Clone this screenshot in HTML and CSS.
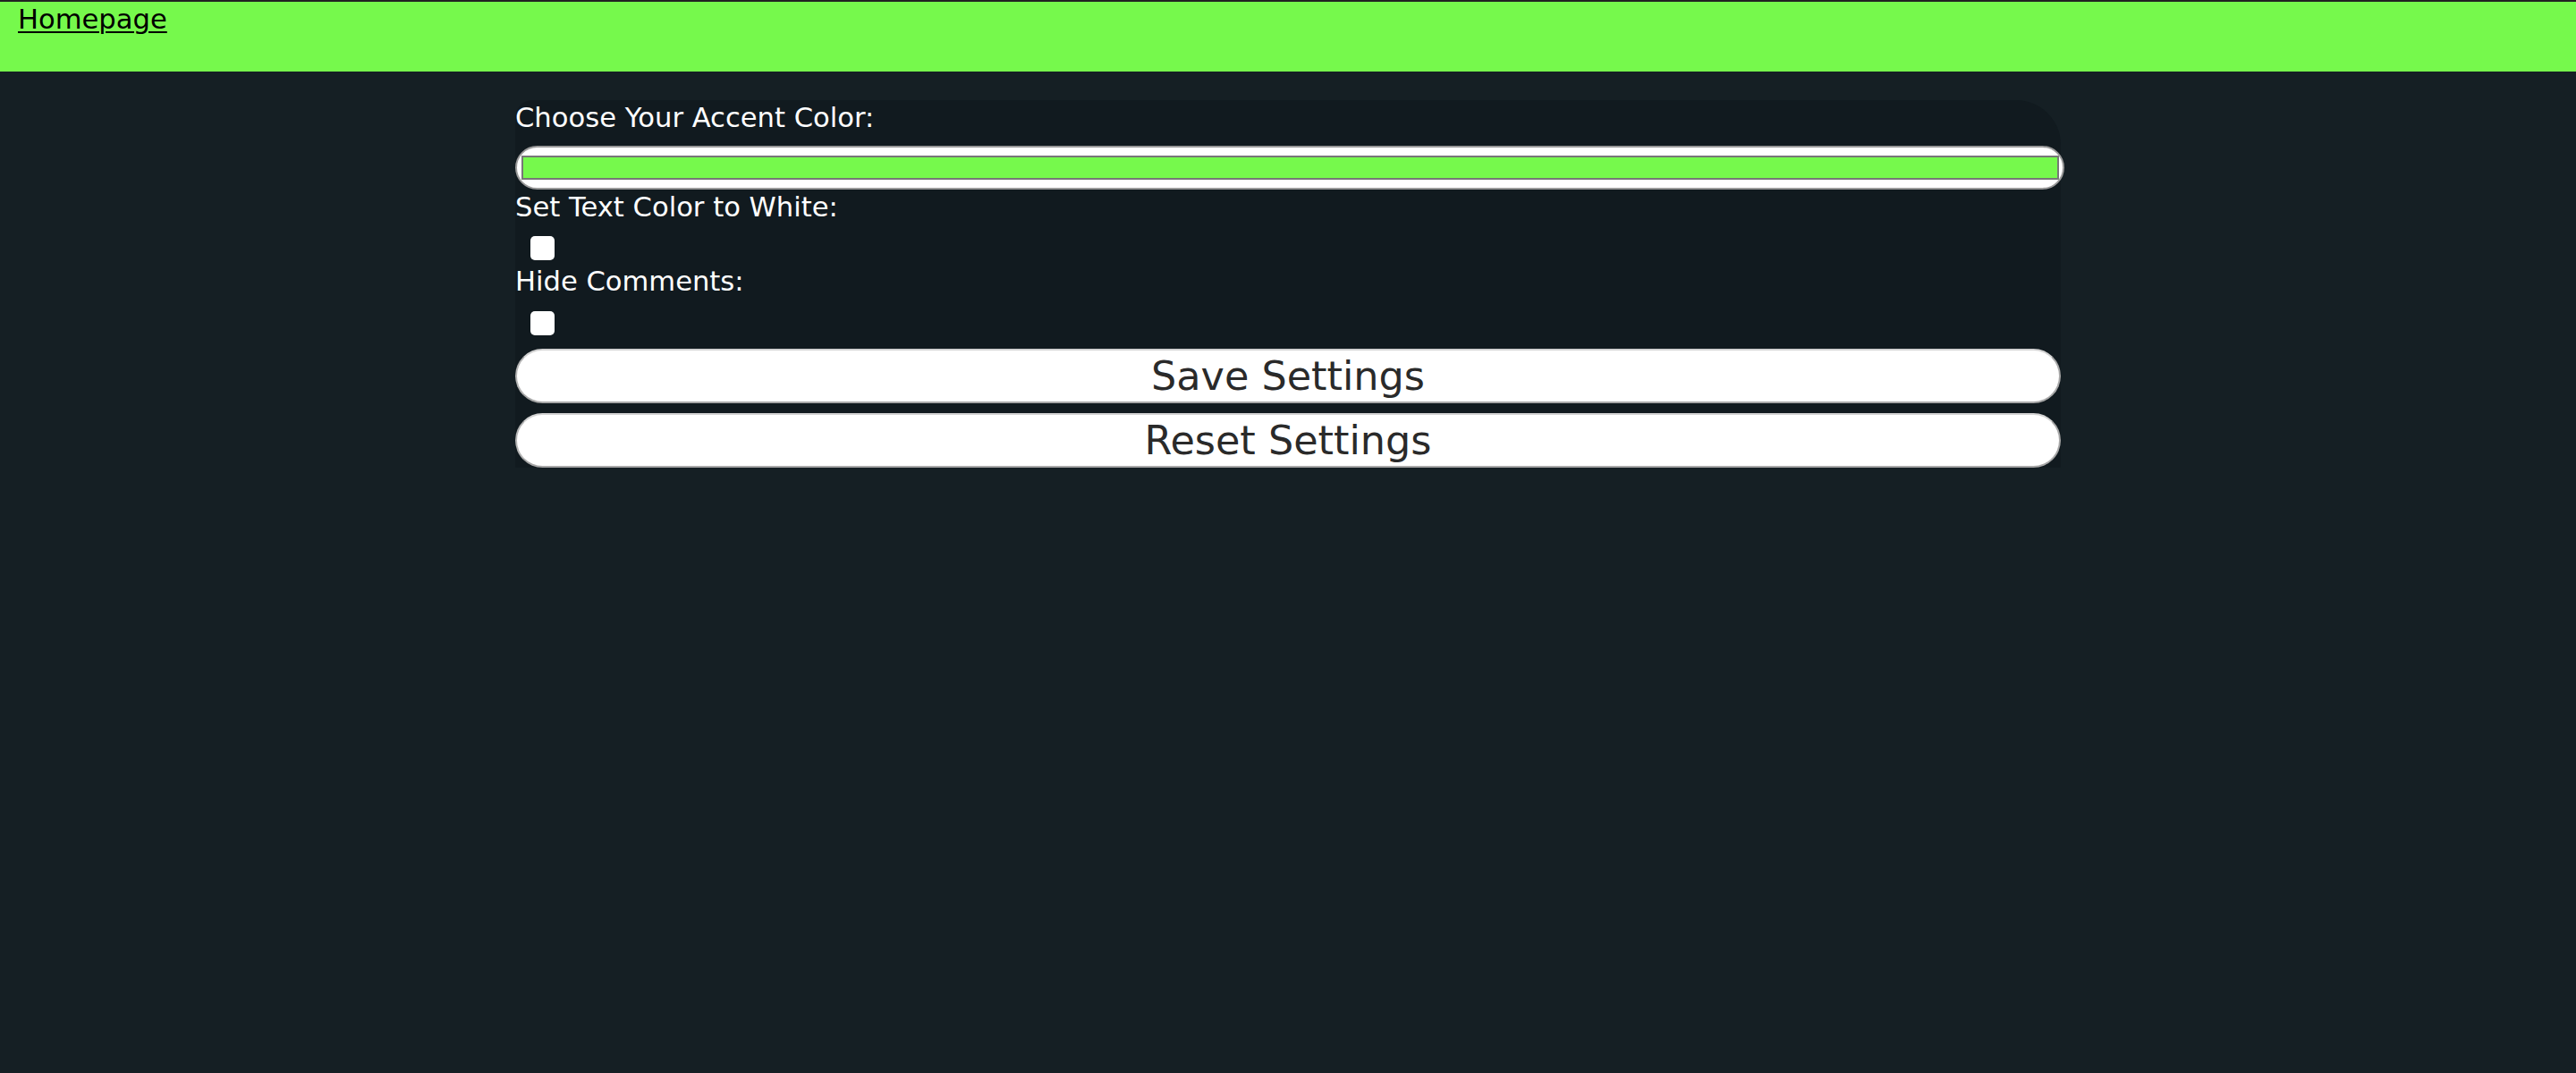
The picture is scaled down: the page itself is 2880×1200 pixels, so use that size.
FILE: index.html
```html
<!DOCTYPE html>
<html lang="en">
<head>
<meta charset="utf-8">
<title>Settings</title>
<link rel="stylesheet" href="styles.css">
</head>
<body>
<header class="topbar">
  <a class="home-link" href="#">Homepage</a>
</header>
<main>
  <form class="settings">
    <label class="field-label" for="accent">Choose Your Accent Color:</label>
    <input class="color-input" type="color" id="accent" value="#76f94c">
    <label class="field-label" for="white">Set Text Color to White:</label>
    <input class="check" type="checkbox" id="white">
    <label class="field-label" for="hide">Hide Comments:</label>
    <input class="check" type="checkbox" id="hide">
    <button class="btn" type="button">Save Settings</button>
    <button class="btn" type="button">Reset Settings</button>
  </form>
</main>
</body>
</html>
```
FILE: styles.css
```css
html, body {
  margin: 0;
  padding: 0;
}
body {
  background: #151f24;
  font-family: "DejaVu Sans", Verdana, sans-serif;
  color: #fff;
}
.topbar {
  height: 78px;
  border-top: 2px solid #222;
  background: #76f94c;
}
.home-link {
  display: inline-block;
  margin-left: 20px;
  font-size: 30.6px;
  line-height: 39px;
  color: #000;
  text-decoration: underline;
  text-underline-offset: 3px;
  text-decoration-thickness: 2px;
}
.settings {
  width: 60%;
  margin: 32px auto 0;
  background: #111a1f;
  border-radius: 20px 50px 0 0;
  display: flex;
  flex-direction: column;
  align-items: flex-start;
}
.field-label {
  display: block;
  height: 40px;
  font-size: 30.6px;
  line-height: 40px;
  color: #fff;
}
.color-input {
  -webkit-appearance: none;
  appearance: none;
  box-sizing: border-box;
  width: calc(100% + 4px);
  height: 49px;
  margin: 11px 0 0;
  padding: 0;
  border: 2px solid #9a9a9a;
  border-radius: 25px;
  background: #fff;
}
.color-input::-webkit-color-swatch-wrapper {
  padding: 9px 4px 9px 5px;
}
.color-input::-webkit-color-swatch {
  border: 2px solid #777;
  border-radius: 0;
}
.check {
  -webkit-appearance: none;
  appearance: none;
  width: 27px;
  height: 27px;
  margin: 12px 0 0 17px;
  background: #fff;
  border-radius: 5px;
}
.field-label + .check + .field-label {
  margin-top: 4px;
}
.field-label + .check + .field-label + .check {
  margin-top: 13px;
}
.btn {
  box-sizing: border-box;
  width: 100%;
  height: 61px;
  margin: 11px 0 0;
  padding: 0;
  background: #fff;
  border: 2px solid;
  border-color: #d2d2d2 #a8a8a8 #a8a8a8 #b4b4b4;
  border-radius: 31px;
  font-family: "DejaVu Sans", Verdana, sans-serif;
  font-size: 44.5px;
  line-height: 57px;
  color: #2a2a2a;
}
.check + .btn {
  margin-top: 15px;
}
```
